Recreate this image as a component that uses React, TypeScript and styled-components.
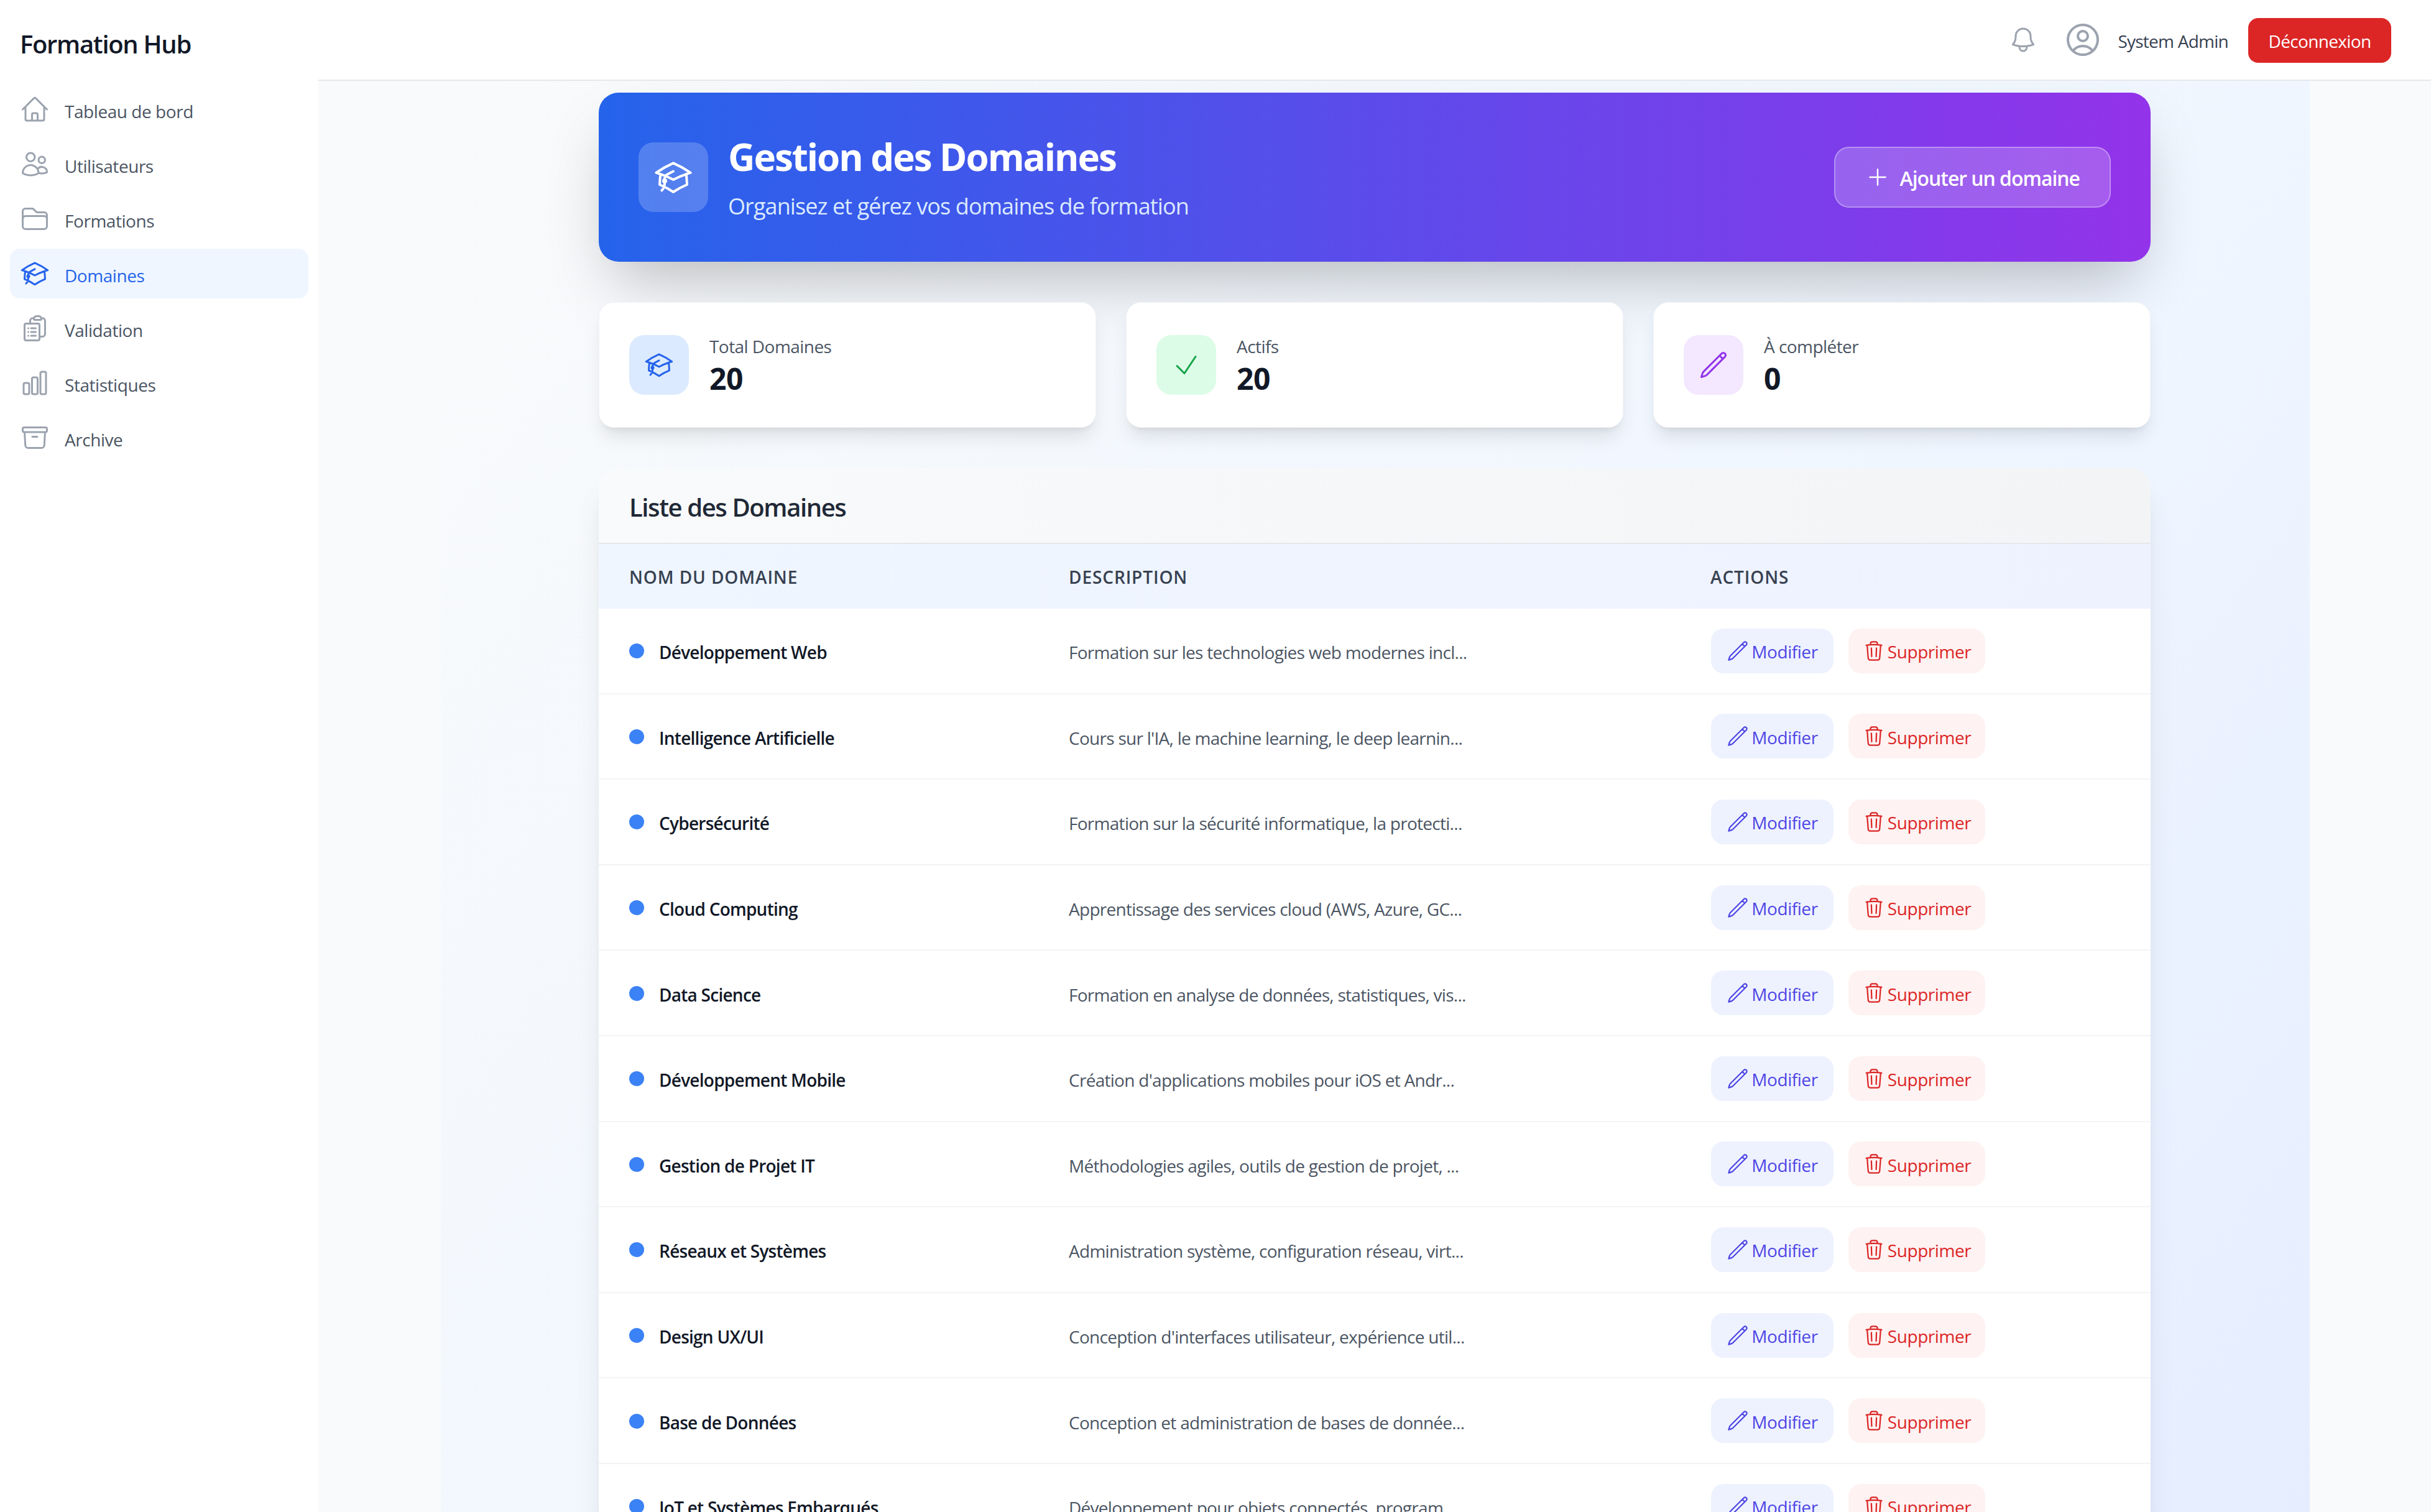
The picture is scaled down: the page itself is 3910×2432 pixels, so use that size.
import React from "react";
import styled, { createGlobalStyle } from "styled-components";
import {
  HiOutlineHome, HiOutlineUsers, HiOutlineFolder, HiOutlineAcademicCap,
  HiOutlineClipboardDocumentList, HiOutlineChartBar, HiOutlineArchiveBox,
  HiOutlineBell, HiOutlineUserCircle, HiOutlinePlus, HiOutlineCheck,
  HiOutlinePencil, HiOutlineTrash,
} from "react-icons/hi2";

const Global = createGlobalStyle`
  html, body { margin: 0; padding: 0; height: 100%; overflow: hidden; background: #f9fafb; }
  * { box-sizing: border-box; }
  body { font-family: "Open Sans", "Noto Sans", sans-serif; }
`;

const Shell = styled.div`display: flex; width: 3910px; height: 2432px; overflow: hidden;`;
const Sidebar = styled.aside`width: 512px; flex: none; background: #fff; display: flex; flex-direction: column;`;
const Brand = styled.div`
  height: 136px; padding: 5px 0 0 32px; display: flex; align-items: center;
  font-size: 40px; font-weight: 600; color: #111827; letter-spacing: -1.3px;
`;
const Nav = styled.nav`display: flex; flex-direction: column; gap: 8px; padding: 0 16px;`;
const NavItem = styled.div<{ $active?: boolean }>`
  height: 80px; padding: 0 16px; display: flex; align-items: center; gap: 24px;
  border-radius: 16px; font-size: 28px; font-weight: 500; letter-spacing: -0.45px;
  color: ${p => (p.$active ? "#2563eb" : "#4b5563")};
  background: ${p => (p.$active ? "#eff6ff" : "transparent")};
  svg { width: 48px; height: 48px; flex: none; color: ${p => (p.$active ? "#2563eb" : "#9ca3af")}; }
`;
const Lift = styled.span<{ $by: number }>`padding-top: ${p => p.$by}px;`;

const Column = styled.div`flex: 1; min-width: 0; display: flex; flex-direction: column;`;
const Topbar = styled.header`
  height: 130px; flex: none; background: #fff; border-bottom: 2px solid #e5e7eb;
  display: flex; align-items: center; justify-content: flex-end; padding: 0 64px 0 0;
`;
const BellIcon = styled(HiOutlineBell)`width: 48px; height: 48px; color: #9ca3af; margin-right: 40px;`;
const UserIcon = styled(HiOutlineUserCircle)`width: 64px; height: 64px; color: #9ca3af; margin-right: 24px;`;
const UserName = styled.span`font-size: 28px; color: #374151; margin-right: 32px; letter-spacing: -0.75px; padding-top: 4px;`;
const Logout = styled.button`
  width: 230px; height: 72px; border: 0; border-radius: 16px; background: #dc2626; color: #fff; margin-top: 2px;
  font: 500 28px "Open Sans", sans-serif; letter-spacing: -0.65px; padding: 2px 0 0;
`;

const Main = styled.main`flex: 1; min-height: 0; overflow: hidden; background: #f9fafb; display: flex; justify-content: center;`;
const Canvas = styled.div`
  width: 3006px; height: 3780px; flex: none; margin-left: 2px;
  background: linear-gradient(to bottom right, #f9fafb, #eff6ff, #e0e7ff);
  padding: 19px 2px 0 0; display: flex; flex-direction: column; align-items: center;
`;
const Content = styled.div`width: 2496px; display: flex; flex-direction: column; gap: 64px;`;

const Banner = styled.section`
  height: 272px; padding: 64px; border-radius: 32px; display: flex; align-items: center; justify-content: space-between;
  background: linear-gradient(to right, #2563eb, #9333ea);
  box-shadow: 0 50px 100px -24px rgba(0, 0, 0, 0.25);
`;
const BannerLead = styled.div`display: flex; align-items: center; gap: 32px;`;
const BannerTile = styled.div`
  width: 112px; height: 112px; border-radius: 24px; background: rgba(255, 255, 255, 0.2);
  display: flex; align-items: center; justify-content: center; color: #fff;
  svg { width: 64px; height: 64px; }
`;
const BannerText = styled.div`display: flex; flex-direction: column; gap: 16px; padding-top: 5px;`;
const BannerTitle = styled.h1`margin: 0; font-size: 60px; line-height: 72px; font-weight: 700; color: #fff; letter-spacing: -2px;`;
const BannerSub = styled.p`margin: 0; font-size: 36px; line-height: 56px; color: #dbeafe; letter-spacing: -0.9px;`;
const AddButton = styled.button`
  height: 98px; padding: 0 48px; border: 2px solid rgba(255, 255, 255, 0.3); border-radius: 24px;
  background: rgba(255, 255, 255, 0.2); color: #fff; display: flex; align-items: center; gap: 16px;
  font: 600 32px "Open Sans", sans-serif; letter-spacing: -1.05px;
  svg { width: 40px; height: 40px; }
`;

const Stats = styled.section`display: grid; grid-template-columns: repeat(3, 1fr); gap: 48px; margin-top: 1px;`;
const StatCard = styled.div`
  height: 202px; padding: 48px; border-radius: 24px; background: #fff; border: 1px solid #f3f4f6;
  display: flex; align-items: center; gap: 33px;
  box-shadow: 0 20px 30px -6px rgba(0, 0, 0, 0.1), 0 8px 12px -8px rgba(0, 0, 0, 0.1);
`;
const StatTile = styled.div<{ $bg: string; $fg: string }>`
  width: 96px; height: 96px; border-radius: 24px; flex: none; background: ${p => p.$bg}; color: ${p => p.$fg};
  display: flex; align-items: center; justify-content: center;
  svg { width: 48px; height: 48px; }
`;
const StatText = styled.div`display: flex; flex-direction: column; padding-top: 4px;`;
const StatLabel = styled.span`font-size: 28px; line-height: 40px; font-weight: 500; color: #4b5563; letter-spacing: -0.55px;`;
const StatValue = styled.span`font-size: 48px; line-height: 64px; font-weight: 700; color: #111827; letter-spacing: -0.4px;`;

const TableCard = styled.section`
  background: #fff; border-radius: 32px 32px 0 0; margin-top: 1px;
  box-shadow: 0 40px 50px -10px rgba(0, 0, 0, 0.1), 0 16px 20px -12px rgba(0, 0, 0, 0.1);
`;
const TableHead = styled.div`
  height: 122px; padding: 5px 49px 0; display: flex; align-items: center; border-bottom: 2px solid #e5e7eb;
  border-radius: 32px 32px 0 0; background: linear-gradient(to right, #f9fafb, #f3f4f6);
  font-size: 40px; font-weight: 600; color: #1f2937; letter-spacing: -1.4px;
`;
const Columns = styled.div`display: grid; grid-template-columns: 707px 1032px 1fr;`;
const HeadRow = styled(Columns)`
  height: 104px; align-items: center; background: linear-gradient(to right, #eff6ff, #eef2ff);
  font-size: 28px; font-weight: 600; color: #374151; text-transform: uppercase; letter-spacing: 0.9px;
`;
const HeadCell = styled.div`padding: 2px 0 0 49px;`;
const Row = styled(Columns)`height: 137.6px; align-items: center; border-bottom: 2px solid #f3f4f6;`;
const NameCell = styled.div`
  padding: 5px 0 0 49px; display: flex; align-items: center; gap: 24px;
  font-size: 28px; font-weight: 600; color: #111827; letter-spacing: -0.75px;
`;
const Dot = styled.span`width: 24px; height: 24px; border-radius: 50%; background: #3b82f6; flex: none; margin-top: -4px;`;
const DescCell = styled.div`padding: 5px 0 0 49px; font-size: 28px; color: #4b5563; letter-spacing: -0.72px; white-space: nowrap;`;
const ActionCell = styled.div`padding-left: 50px; display: flex; gap: 24px;`;
const ActionButton = styled.button<{ $bg: string; $fg: string; $w: number }>`
  width: ${p => p.$w}px; height: 72px; border: 0; border-radius: 20px; padding: 0;
  background: ${p => p.$bg}; color: ${p => p.$fg};
  display: flex; align-items: center; justify-content: center; gap: 4px;
  font: 500 28px "Open Sans", sans-serif; letter-spacing: -0.45px;
  svg { width: 36px; height: 36px; flex: none; }
`;

const nav = [
  { label: "Tableau de bord", Icon: HiOutlineHome },
  { label: "Utilisateurs", Icon: HiOutlineUsers },
  { label: "Formations", Icon: HiOutlineFolder },
  { label: "Domaines", Icon: HiOutlineAcademicCap, active: true },
  { label: "Validation", Icon: HiOutlineClipboardDocumentList },
  { label: "Statistiques", Icon: HiOutlineChartBar },
  { label: "Archive", Icon: HiOutlineArchiveBox },
];

const rows = [
  ["Développement Web", "Formation sur les technologies web modernes incl..."],
  ["Intelligence Artificielle", "Cours sur l'IA, le machine learning, le deep learnin..."],
  ["Cybersécurité", "Formation sur la sécurité informatique, la protecti..."],
  ["Cloud Computing", "Apprentissage des services cloud (AWS, Azure, GC..."],
  ["Data Science", "Formation en analyse de données, statistiques, vis..."],
  ["Développement Mobile", "Création d'applications mobiles pour iOS et Andr..."],
  ["Gestion de Projet IT", "Méthodologies agiles, outils de gestion de projet, ..."],
  ["Réseaux et Systèmes", "Administration système, configuration réseau, virt..."],
  ["Design UX/UI", "Conception d'interfaces utilisateur, expérience util..."],
  ["Base de Données", "Conception et administration de bases de donnée..."],
  ["IoT et Systèmes Embarqués", "Développement pour objets connectés, program..."],
];

export default function App() {
  return (
    <Shell>
      <Global />
      <Sidebar>
        <Brand>Formation Hub</Brand>
        <Nav>
          {nav.map(({ label, Icon, active }) => (
            <NavItem key={label} $active={active}><Icon /><Lift $by={5}>{label}</Lift></NavItem>
          ))}
        </Nav>
      </Sidebar>
      <Column>
        <Topbar>
          <BellIcon />
          <UserIcon />
          <UserName>System Admin</UserName>
          <Logout>Déconnexion</Logout>
        </Topbar>
        <Main>
          <Canvas>
            <Content>
              <Banner>
                <BannerLead>
                  <BannerTile><HiOutlineAcademicCap /></BannerTile>
                  <BannerText>
                    <BannerTitle>Gestion des Domaines</BannerTitle>
                    <BannerSub>Organisez et gérez vos domaines de formation</BannerSub>
                  </BannerText>
                </BannerLead>
                <AddButton><HiOutlinePlus /><Lift $by={2}>Ajouter un domaine</Lift></AddButton>
              </Banner>
              <Stats>
                <StatCard>
                  <StatTile $bg="#dbeafe" $fg="#2563eb"><HiOutlineAcademicCap /></StatTile>
                  <StatText><StatLabel>Total Domaines</StatLabel><StatValue>20</StatValue></StatText>
                </StatCard>
                <StatCard>
                  <StatTile $bg="#dcfce7" $fg="#16a34a"><HiOutlineCheck /></StatTile>
                  <StatText><StatLabel>Actifs</StatLabel><StatValue>20</StatValue></StatText>
                </StatCard>
                <StatCard>
                  <StatTile $bg="#f3e8ff" $fg="#9333ea"><HiOutlinePencil /></StatTile>
                  <StatText><StatLabel>À compléter</StatLabel><StatValue>0</StatValue></StatText>
                </StatCard>
              </Stats>
              <TableCard>
                <TableHead>Liste des Domaines</TableHead>
                <HeadRow>
                  <HeadCell>Nom du domaine</HeadCell>
                  <HeadCell>Description</HeadCell>
                  <HeadCell>Actions</HeadCell>
                </HeadRow>
                {rows.map(([name, desc]) => (
                  <Row key={name}>
                    <NameCell><Dot />{name}</NameCell>
                    <DescCell>{desc}</DescCell>
                    <ActionCell>
                      <ActionButton $w={197} $bg="#eef2ff" $fg="#4f46e5"><HiOutlinePencil /><Lift $by={3}>Modifier</Lift></ActionButton>
                      <ActionButton $w={220} $bg="#fef2f2" $fg="#dc2626"><HiOutlineTrash /><Lift $by={3}>Supprimer</Lift></ActionButton>
                    </ActionCell>
                  </Row>
                ))}
              </TableCard>
            </Content>
          </Canvas>
        </Main>
      </Column>
    </Shell>
  );
}
